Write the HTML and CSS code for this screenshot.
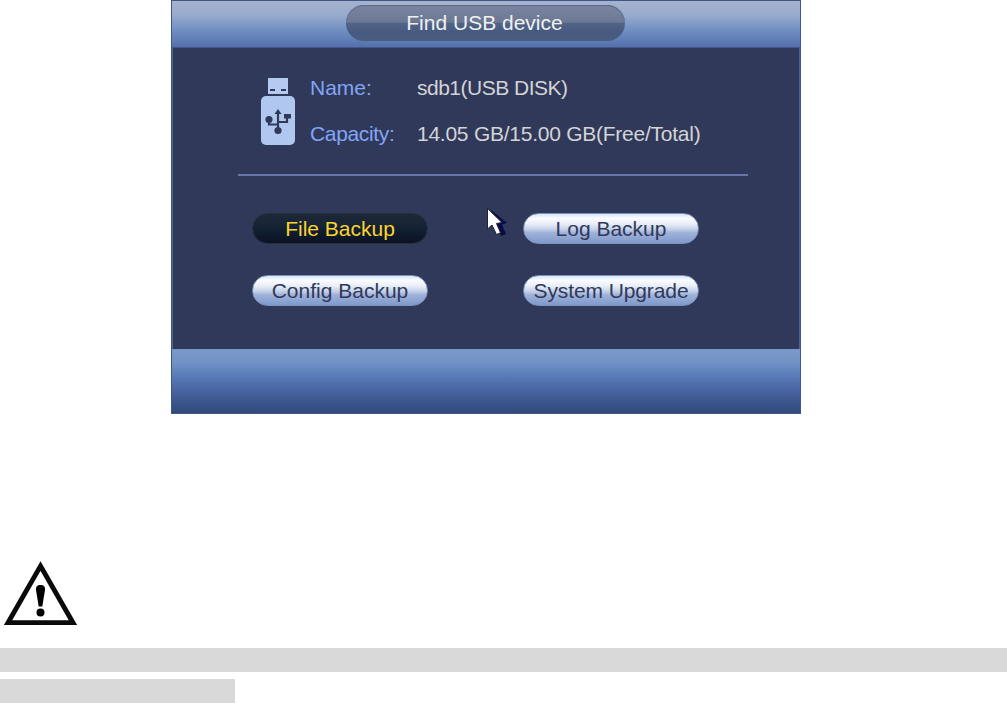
FILE: index.html
```html
<!DOCTYPE html>
<html lang="en">
<head>
    <meta charset="UTF-8">
    <meta name="viewport" content="width=device-width, initial-scale=1.0">
    <title>Find USB device</title>
    <link rel="stylesheet" href="styles.css">
</head>
<body>
    <div class="dialog">
        <div class="dialog-header">
            <div class="dialog-title">Find USB device</div>
        </div>
        <div class="dialog-body">
            <div class="device-info">
                <svg class="usb-icon" viewBox="0 0 34 68">
                    <rect x="7" y="0" width="20" height="16" fill="#b6c9ee"/>
                    <path d="M9 11h5v2H9zM20 11h5v2h-5z" fill="#30395a"/>
                    <rect x="0" y="18" width="34" height="49" rx="5" fill="#b0c8ef"/>
                    <g fill="none" stroke="#30395a" stroke-width="2.200">
                        <path d="M17 35v17M8 42v4.500h9M26 39v5h-9"/>
                    </g>
                    <g fill="#30395a">
                        <path d="M17 31l3.500 5h-7z"/>
                        <circle cx="8" cy="41.500" r="3.600"/>
                        <circle cx="17" cy="52.500" r="3.600"/>
                        <rect x="23" y="36" width="7" height="4.500"/>
                    </g>
                </svg>
                <dl class="device-details">
                    <dt>Name:</dt>
                    <dd class="device-name">sdb1(USB DISK)</dd>
                    <dt class="capacity">Capacity:</dt>
                    <dd>14.05 GB/15.00 GB(Free/Total)</dd>
                </dl>
            </div>
            <div class="divider"></div>
            <div class="actions">
                <button class="btn btn-active">File Backup</button>
                <button class="btn">Log Backup</button>
                <button class="btn">Config Backup</button>
                <button class="btn btn-wide">System Upgrade</button>
            </div>
            <svg class="cursor" viewBox="0 0 24 32">
                <path d="M4 3L20 16l-5 1.500 4 9.500-5 2-4-10z" fill="#080b45"/>
                <path d="M.5 1.500v20.500l4.500-4 4.500 9.500 4-1.700-4-9.300 5.500-1z" fill="#fff" stroke="#20243a" stroke-width="1"/>
            </svg>
        </div>
        <div class="dialog-footer"></div>
    </div>

    <svg class="warning-icon" viewBox="0 0 74 66">
        <path d="M36.500 5L69 61.700H4z" fill="none" stroke="#0a0a0a" stroke-width="4.800"/>
        <path d="M36.500 24c3.500 0 4.800 2 4.500 5L38.300 45.500h-3.600L32 29c-.3-3 1-5 4.500-5z"/>
        <circle cx="36.500" cy="51.500" r="4"/>
    </svg>

    <div class="bar"></div>
    <div class="bar bar-short"></div>
</body>
</html>
```

FILE: styles.css
```css
* {
    margin: 0;
    padding: 0;
    box-sizing: border-box;
}

body {
    background-color: #fff;
    font-family: "Liberation Sans", Arial, sans-serif;
    font-size: 21px;
    height: 703px;
    overflow: hidden;
}

.dialog {
    width: 630px;
    height: 414px;
    margin-left: 171px;
    border: 1px solid #40568a;
    display: flex;
    flex-direction: column;
}

.dialog-header {
    height: 47px;
    padding-top: 4px;
    background: linear-gradient(#a6b2cb, #98abcd 30%, #7390c3 62%, #5370ab);
    border-bottom: 1px solid #40558b;
    display: flex;
    justify-content: center;
    align-items: flex-start;
}

.dialog-title {
    width: 279px;
    height: 36px;
    line-height: 36px;
    padding-right: 2px;
    border-radius: 18px;
    background: linear-gradient(#7c85a0, #6b7894 48%, #526486 50%, #465a80 75%, #4a5d80);
    box-shadow: inset 0 1px 1px #586987;
    color: #f0f0f0;
    text-align: center;
    margin-right: 1px;
}

.dialog-body {
    position: relative;
    height: 301px;
    padding: 17px 0 0 65px;
    border-left: 1px solid #4b6496;
    border-right: 1px solid #4b6496;
    background-color: #30395a;
}

.device-info {
    display: flex;
    padding-left: 23px;
    height: 109px;
}

.usb-icon {
    width: 34px;
    height: 68px;
    margin: 13px 15px 0 0;
}

.device-details {
    display: grid;
    grid-template-columns: 107px auto;
    grid-auto-rows: 46px;
    line-height: 46px;
    white-space: nowrap;
}

.device-details dt {
    color: #83a5f5;
}

.device-details .capacity {
    letter-spacing: -0.35px;
}

.device-details dd {
    color: #d3d4d6;
    letter-spacing: -0.25px;
}

.device-details .device-name {
    letter-spacing: -0.5px;
}

.divider {
    width: 510px;
    height: 2px;
    background-color: #6b74a8;
}

.actions {
    display: grid;
    grid-template-columns: 176px 176px;
    grid-auto-rows: 31px;
    column-gap: 95px;
    row-gap: 31px;
    padding: 37px 0 0 14px;
}

.btn {
    border: 1px solid #7f92bd;
    border-radius: 16px;
    background: linear-gradient(#d8e4f8, #fbfcfe 15%, #e8edf7 35%, #c4d0e8 53%, #9fb1d9 65%, #7f9acb);
    color: #30395a;
    font-family: inherit;
    font-size: 21px;
    line-height: 29px;
    white-space: nowrap;
}

.btn-active {
    border-color: #27303f;
    background: linear-gradient(#1d2736, #182536 35%, #101d30 60%, #0b1324);
    color: #fdd32e;
}

.btn-wide {
    letter-spacing: -0.1px;
}

.cursor {
    position: absolute;
    left: 314px;
    top: 159px;
    width: 24px;
    height: 32px;
}

.dialog-footer {
    flex: 1;
    border-top: 1px solid #7397ca;
    background: linear-gradient(#7b99ca, #7092c6 20%, #5577b5 45%, #445f9b 70%, #2f4a79);
}

.warning-icon {
    display: block;
    width: 74px;
    height: 66px;
    margin: 147px 0 21px 4px;
}

.bar {
    height: 24px;
    background-color: #d9d9d9;
}

.bar-short {
    width: 235px;
    margin-top: 7px;
}
```
